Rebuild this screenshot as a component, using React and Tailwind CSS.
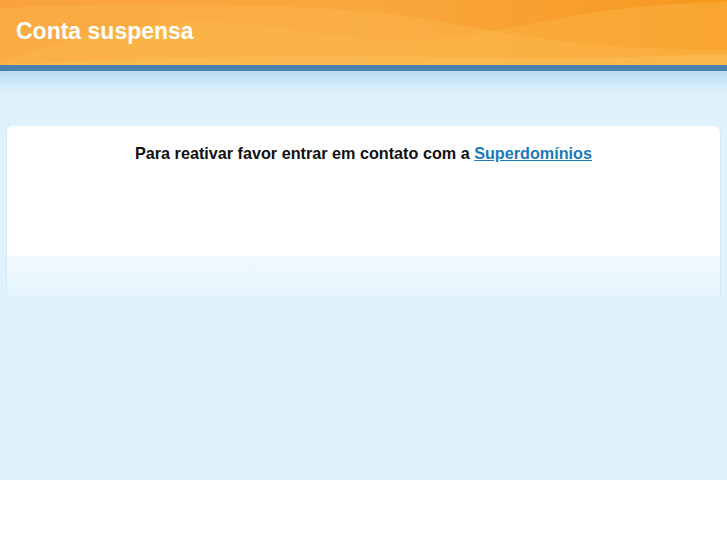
import React from "react";

const Waves = () => (
  <svg
    className="absolute inset-0 h-full w-full"
    viewBox="0 0 727 65"
    preserveAspectRatio="none"
  >
    <path
      d="M0 62 C 70 35, 150 20, 220 22 C 300 25, 340 42, 410 40 C 480 37, 540 20, 610 10 C 670 3, 710 2, 727 2 L727 65 L0 65 Z"
      fill="#fbb443"
      opacity="0.5"
    />
    <path
      d="M0 8 C 120 4, 300 0, 420 18 C 500 32, 580 50, 727 50 L727 65 L0 65 Z"
      fill="#fcbd52"
      opacity="0.35"
    />
    <path
      d="M0 65 C 140 58, 300 54, 430 57 C 540 60, 650 57, 727 54 L727 65 Z"
      fill="#fcc05a"
      opacity="0.55"
    />
  </svg>
);

export default function App() {
  return (
    <div className="w-full" style={{ fontFamily: "'Liberation Sans', Arial, sans-serif" }}>
      <header className="relative h-[65px] overflow-hidden bg-gradient-to-r from-[#f9a23c] via-[#f9a83e] to-[#f7971c]">
        <Waves />
        <h1 className="relative pl-4 pt-[18px] text-[23px] font-bold leading-[27px] text-white">
          Conta suspensa
        </h1>
      </header>
      <div className="h-[6px] bg-[#4d80aa]" />
      <main className="h-[409px] bg-[#dff2fc]">
        <div className="h-[22px] bg-gradient-to-b from-[#b6dcf0] to-[#dff2fc]" />
        <div className="px-[6px] pt-[33px]">
          <section className="overflow-hidden rounded-t-[6px] border-x border-[#d2ebf8]">
            <div className="h-[130px] bg-white pt-[15px] text-center text-[16.2px] font-bold text-[#111]">
              Para reativar favor entrar em contato com a{" "}
              <a href="#" className="text-[#1a79b9] underline">
                Superdomínios
              </a>
            </div>
            <div className="h-[40px] bg-gradient-to-b from-[#f1f9fd] to-[#e5f5fd]" />
          </section>
        </div>
      </main>
    </div>
  );
}
